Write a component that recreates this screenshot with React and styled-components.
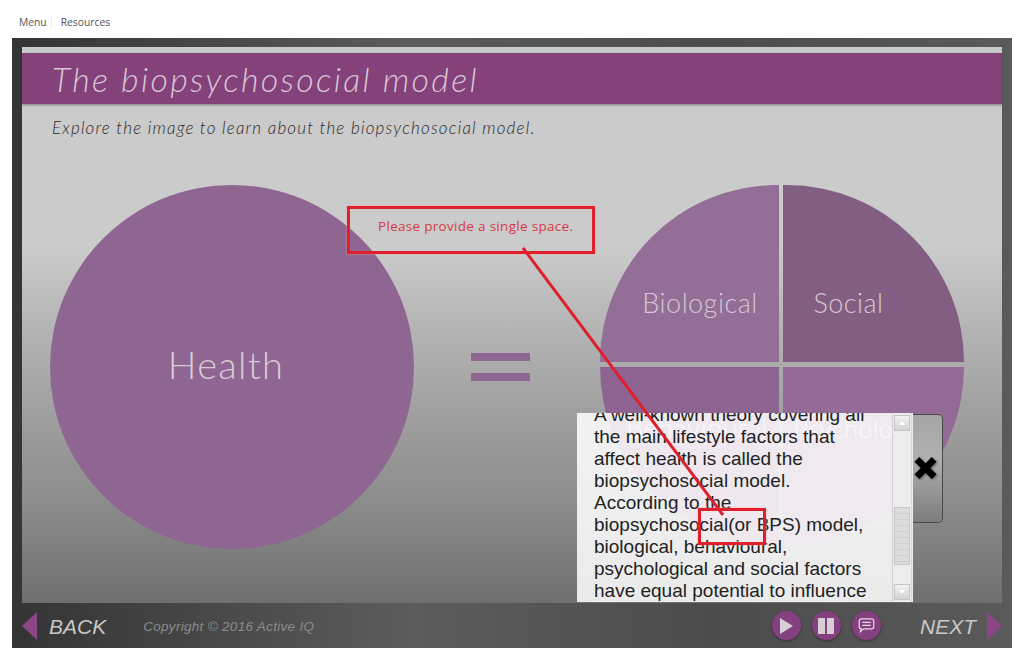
import React from 'react'
import styled, { createGlobalStyle } from 'styled-components'

const Global = createGlobalStyle`
    html, body {
        margin: 0;
        padding: 0;
        background: #fff;
        font-family: 'Liberation Sans', Arial, sans-serif;
    }
    * { box-sizing: border-box; }
`

const Page = styled.div`
    position: relative;
    width: 1021px;
    height: 656px;
    overflow: hidden;
    background: #fff;
`
const TopNav = styled.nav`
    height: 38px;
    padding: 15px 0 0 19px;
    display: flex;
    align-items: flex-start;
    font-family: 'Open Sans', sans-serif;
    font-size: 10.3px;
    line-height: 14px;
    color: #555;
`
const NavItem = styled.a`
    padding-right: ${p => (p.$first ? '4px' : '0')};
    margin-right: ${p => (p.$first ? '9px' : '0')};
    border-right: ${p => (p.$first ? '1px solid #eee' : 'none')};
`
const Frame = styled.div`
    width: 1000px;
    height: 610px;
    margin-left: 12px;
    padding: 9px 10px 0;
    display: flex;
    flex-direction: column;
    background: linear-gradient(90deg, #343434 0%, #5c5c5c 40%, #4c4c4c 70%, #5a5a5a 100%);
`
const Slide = styled.section`
    position: relative;
    height: 556px;
    padding-top: 6px;
    display: flex;
    flex-direction: column;
    background: linear-gradient(180deg, #cbcbcb 0%, #cbcbcb 36%, #b2b2b2 52%, #a2a2a2 64%, #8c8c8c 82%, #6f6f6f 100%);
`
const TitleBand = styled.header`
    height: 51px;
    padding-left: 30px;
    background: #85417a;
    box-shadow: 0 1px 2px rgba(60, 40, 60, 0.5);
    display: flex;
    align-items: center;
`
const Title = styled.h1`
    margin: 0;
    font-family: 'Lato', sans-serif;
    font-weight: 300;
    font-style: italic;
    font-size: 34px;
    letter-spacing: 2.3px;
    color: #d5c7d4;
`
const Subtitle = styled.p`
    margin: 14px 0 0 30px;
    height: 20px;
    font-family: 'Lato', sans-serif;
    font-weight: 300;
    font-style: italic;
    font-size: 17px;
    line-height: 20px;
    letter-spacing: 1.18px;
    color: #2a2a2a;
`
const Stage = styled.div`
    margin-top: 47px;
    padding-left: 28px;
    display: flex;
    align-items: flex-start;
`
const HealthCircle = styled.div`
    width: 364px;
    height: 364px;
    border-radius: 50%;
    background: #8e6691;
    display: flex;
    align-items: center;
    justify-content: center;
    padding: 0 12px 6px 0;
    font-family: 'Lato', sans-serif;
    font-weight: 300;
    font-size: 38px;
    letter-spacing: 1.3px;
    color: #d8cbd8;
`
const Equals = styled.div`
    width: 59px;
    margin: 168px 70px 0 57px;
    display: flex;
    flex-direction: column;
    gap: 12px;
`
const EqualBar = styled.span`
    display: block;
    height: 8px;
    background: #8e6691;
`
const Pie = styled.div`
    width: 364px;
    height: 364px;
    display: grid;
    grid-template-columns: 179px 181px;
    grid-template-rows: 177px 177px;
    column-gap: 4px;
    row-gap: 5px;
`
const Quadrant = styled.div`
    display: flex;
    justify-content: center;
    align-items: ${p => (p.$lower ? 'flex-start' : 'flex-end')};
    padding: ${p => p.$pad};
    background: ${p => p.$bg};
    border-radius: ${p => p.$radius};
    font-family: 'Lato', sans-serif;
    font-weight: 300;
    font-size: ${p => p.$size || 27}px;
    line-height: 28px;
    letter-spacing: 0.5px;
    color: #d5c7d5;
`
const Footer = styled.footer`
    flex: 1;
    padding-top: 3px;
    display: flex;
    align-items: center;
    font-style: italic;
`
const NavTriangle = styled.span`
    width: 0;
    height: 0;
    margin-top: -3px;
    border-top: 14.5px solid transparent;
    border-bottom: 14.5px solid transparent;
    border-${p => (p.$next ? 'left' : 'right')}: 15px solid #8c4686;
`
const NavLabel = styled.a`
    font-size: 21px;
    color: #c8c8c8;
    margin: ${p => p.$margin};
`
const Copyright = styled.span`
    font-size: 13.5px;
    letter-spacing: 0.3px;
    color: #8b8b8b;
    margin: -2px 0 0 37px;
`
const Controls = styled.div`
    margin: -3px 0 0 auto;
    display: flex;
    gap: 11px;
`
const RoundButton = styled.button`
    width: 29px;
    height: 29px;
    padding: 0;
    border: none;
    border-radius: 50%;
    background: #85417f;
    box-shadow: 0 1px 3px rgba(0, 0, 0, 0.4);
    display: flex;
    align-items: center;
    justify-content: center;
`
const Popup = styled.aside`
    position: absolute;
    left: 555px;
    top: 366px;
    display: flex;
    align-items: flex-start;
`
const PopupBody = styled.div`
    width: 336px;
    height: 189px;
    display: flex;
    background: rgba(255, 255, 255, 0.86);
`
const PopupText = styled.div`
    flex: 1;
    overflow: hidden;
    padding-left: 17px;
    font-size: 19px;
    line-height: 22px;
    color: #222;
`
const PopupCopy = styled.p`
    margin: -9px 0 0;
    white-space: nowrap;
`
const ScrollTrack = styled.div`
    width: 20px;
    margin-right: 1px;
    padding: 2px 1px;
    display: flex;
    flex-direction: column;
    background: #ececec;
    border-left: 1px solid #d0d0d0;
    border-right: 1px solid #d8d8d8;
`
const ScrollArrow = styled.span`
    height: 16px;
    background: linear-gradient(180deg, #f2f2f2, #d2d2d2);
    border: 1px solid #c4c4c4;
    display: flex;
    align-items: center;
    justify-content: center;
    margin-top: ${p => p.$margin || 0};
    &::after {
        content: '';
        border-left: 3.5px solid transparent;
        border-right: 3.5px solid transparent;
        border-${p => (p.$down ? 'top' : 'bottom')}: 4px solid #fff;
    }
`
const ScrollThumb = styled.span`
    height: 59px;
    margin-top: 76px;
    background: repeating-linear-gradient(180deg, #dcdcdc 0, #dcdcdc 5px, #cfcfcf 5px, #cfcfcf 6px);
    border: 1px solid #c8c8c8;
`
const CloseButton = styled.button`
    width: 30px;
    height: 109px;
    margin-top: 1px;
    padding: 0 4px 0 0;
    border: 1px solid #4a4a4a;
    border-left: none;
    border-radius: 0 5px 5px 0;
    background: linear-gradient(180deg, #a5a5a5 0%, #b0b0b0 40%, #7d7d7d 100%);
    display: flex;
    align-items: center;
    justify-content: center;
`
const CloseMark = styled.svg`
    margin-top: -2px;
    filter: drop-shadow(1px 1px 1px rgba(0, 0, 0, 0.45));
`
const MarkBox = styled.div`
    position: absolute;
    left: ${p => p.$left}px;
    top: ${p => p.$top}px;
    width: ${p => p.$width}px;
    height: ${p => p.$height}px;
    border: 3px solid #e01f2d;
    box-shadow: 0 0 2px rgba(255, 160, 160, 0.8);
`
const MarkNote = styled.span`
    display: block;
    padding: 8px 0 0 28px;
    font-family: 'Open Sans', sans-serif;
    font-size: 13.5px;
    line-height: 18px;
    letter-spacing: 0.3px;
    color: #d83a45;
`
const MarkLine = styled.svg`
    position: absolute;
    left: 0;
    top: 0;
    pointer-events: none;
`

export default function App() {
    return (
        <Page>
            <Global />
            <TopNav>
                <NavItem $first>Menu</NavItem>
                <NavItem>Resources</NavItem>
            </TopNav>
            <Frame>
                <Slide>
                    <TitleBand>
                        <Title>The biopsychosocial model</Title>
                    </TitleBand>
                    <Subtitle>Explore the image to learn about the biopsychosocial model.</Subtitle>
                    <Stage>
                        <HealthCircle>Health</HealthCircle>
                        <Equals>
                            <EqualBar />
                            <EqualBar />
                        </Equals>
                        <Pie>
                            <Quadrant $bg="#936e97" $radius="179px 0 0 0" $pad="0 0 45px 21px">
                                Biological
                            </Quadrant>
                            <Quadrant $bg="#835e83" $radius="0 181px 0 0" $pad="0 50px 45px 0">
                                Social
                            </Quadrant>
                            <Quadrant $lower $bg="#8d6491" $radius="0 0 0 179px" $pad="47px 0 0 15px">
                                Behavioural
                            </Quadrant>
                            <Quadrant $lower $size={25} $bg="#946a97" $radius="0 0 181px 0" $pad="47px 10px 0 0">
                                Psychological
                            </Quadrant>
                        </Pie>
                    </Stage>
                    <Popup>
                        <PopupBody>
                            <PopupText>
                                <PopupCopy>
                                    A well-known theory covering all<br />
                                    the main lifestyle factors that<br />
                                    affect health is called the<br />
                                    biopsychosocial model.<br />
                                    According to the<br />
                                    biopsychosocial(or BPS) model,<br />
                                    biological, behavioural,<br />
                                    psychological and social factors<br />
                                    have equal potential to influence
                                </PopupCopy>
                            </PopupText>
                            <ScrollTrack>
                                <ScrollArrow />
                                <ScrollThumb />
                                <ScrollArrow $down $margin="19px" />
                            </ScrollTrack>
                        </PopupBody>
                        <CloseButton aria-label="Close">
                            <CloseMark width="26" height="26" viewBox="0 0 26 26">
                                <path d="M4 4 L22 22 M22 4 L4 22" stroke="#000" strokeWidth="7" />
                            </CloseMark>
                        </CloseButton>
                    </Popup>
                </Slide>
                <Footer>
                    <NavTriangle />
                    <NavLabel $margin="0 0 0 12px">BACK</NavLabel>
                    <Copyright>Copyright © 2016 Active IQ</Copyright>
                    <Controls>
                        <RoundButton aria-label="Play">
                            <svg width="14" height="16" viewBox="0 0 14 16">
                                <path d="M1 0 L14 8 L1 16 Z" fill="#d6cfd6" />
                            </svg>
                        </RoundButton>
                        <RoundButton aria-label="Pause">
                            <svg width="16" height="16" viewBox="0 0 16 16">
                                <rect x="0" y="0" width="7" height="16" fill="#d6cfd6" />
                                <rect x="9" y="0" width="7" height="16" fill="#d6cfd6" />
                            </svg>
                        </RoundButton>
                        <RoundButton aria-label="Comments">
                            <svg width="17" height="15" viewBox="0 0 18 16" fill="none" stroke="#e2dae2" strokeWidth="1.3">
                                <path d="M3.5 1 H14.5 A2.2 2.2 0 0 1 16.7 3.2 V9.3 A2.2 2.2 0 0 1 14.5 11.5 H6 L2.6 14.4 L3.4 11.5 A2.2 2.2 0 0 1 1.3 9.3 V3.2 A2.2 2.2 0 0 1 3.5 1 Z" />
                                <path d="M4.5 4.6 H13.5 M4.5 7.8 H13.5" />
                            </svg>
                        </RoundButton>
                    </Controls>
                    <NavLabel $margin="0 11px 0 39px">NEXT</NavLabel>
                    <NavTriangle $next />
                </Footer>
            </Frame>
            <MarkBox $left={347} $top={206} $width={248} $height={48}>
                <MarkNote>Please provide a single space.</MarkNote>
            </MarkBox>
            <MarkBox $left={698} $top={508} $width={68} $height={37} />
            <MarkLine width="1021" height="656">
                <line x1="523" y1="248" x2="723" y2="515" stroke="#e01f2d" strokeWidth="3" />
            </MarkLine>
        </Page>
    )
}
